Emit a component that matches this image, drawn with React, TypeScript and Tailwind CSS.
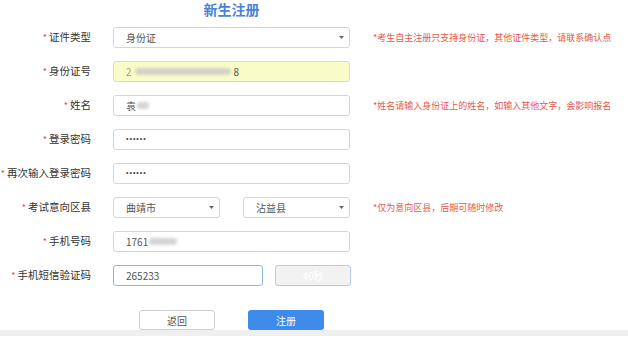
import React from "react";

const font = { fontFamily: '"Noto Sans CJK SC", "Noto Sans", sans-serif' };

function Caret() {
  return (
    <svg width="5" height="3" viewBox="0 0 5 3" className="shrink-0">
      <path d="M0 0 L5 0 L2.5 3 Z" fill="#666" />
    </svg>
  );
}

function Label({ text }: { text: string }) {
  return (
    <div className="w-[91px] shrink-0 flex justify-end items-center text-[10.5px] text-[#333] leading-none">
      <span className="text-[#e64a3b] mr-[2px] text-[9px]">*</span>
      {text}
    </div>
  );
}

function Hint({ text }: { text: string }) {
  return (
    <div className="ml-[23px] text-[9px] text-[#e8574a] leading-none whitespace-nowrap">
      {text}
    </div>
  );
}

function Box({
  children,
  className = "",
}: {
  children?: React.ReactNode;
  className?: string;
}) {
  return (
    <div
      className={
        "h-[21px] flex items-center px-[12px] text-[10px] text-[#555] border rounded-[3px] " +
        className
      }
    >
      {children}
    </div>
  );
}

function Blur({ w }: { w: number }) {
  return (
    <span
      className="inline-block h-[7px] bg-[#c9c9c9] rounded-full blur-[1.5px] opacity-80"
      style={{ width: w }}
    />
  );
}

function Dots() {
  return (
    <span className="font-['Liberation_Sans',sans-serif] text-[7px] tracking-[1px] text-[#444]">
      ••••••
    </span>
  );
}

export default function App() {
  return (
    <div className="w-[628px] h-[347px] bg-white overflow-hidden" style={font}>
      <div className="flex">
        <div className="w-[113px] shrink-0" />
        <div className="w-[237px] h-[27px] pt-[1px] text-center text-[14px] font-bold text-[#4a82d6] leading-[16px]">
          新生注册
        </div>
      </div>

      <div className="flex flex-col gap-[13px]">
        <div className="flex items-center">
          <Label text="证件类型" />
          <Box className="ml-[22px] w-[237px] justify-between border-[#d6d6d6] pr-[5px]">
            <span>身份证</span>
            <Caret />
          </Box>
          <Hint text="*考生自主注册只支持身份证，其他证件类型，请联系确认点" />
        </div>

        <div className="flex items-center">
          <Label text="身份证号" />
          <Box className="ml-[22px] w-[237px] bg-[#f9fcc6] border-[#dcdcc0] gap-[3px]">
            <span className="text-[#999] blur-[0.6px]">2</span>
            <Blur w={96} />
            <span>8</span>
          </Box>
        </div>

        <div className="flex items-center">
          <Label text="姓名" />
          <Box className="ml-[22px] w-[237px] border-[#d6d6d6] gap-[1px]">
            <span>袁</span>
            <Blur w={12} />
          </Box>
          <Hint text="*姓名请输入身份证上的姓名，如输入其他文字，会影响报名" />
        </div>

        <div className="flex items-center">
          <Label text="登录密码" />
          <Box className="ml-[22px] w-[237px] border-[#d6d6d6]">
            <Dots />
          </Box>
        </div>

        <div className="flex items-center">
          <Label text="再次输入登录密码" />
          <Box className="ml-[22px] w-[237px] border-[#d6d6d6]">
            <Dots />
          </Box>
        </div>

        <div className="flex items-center">
          <Label text="考试意向区县" />
          <Box className="ml-[22px] w-[107px] justify-between border-[#d6d6d6] pr-[5px]">
            <span>曲靖市</span>
            <Caret />
          </Box>
          <Box className="ml-[23px] w-[107px] justify-between border-[#d6d6d6] pr-[5px]">
            <span>沾益县</span>
            <Caret />
          </Box>
          <Hint text="*仅为意向区县，后期可随时修改" />
        </div>

        <div className="flex items-center">
          <Label text="手机号码" />
          <Box className="ml-[22px] w-[237px] border-[#d6d6d6] gap-[1px]">
            <span>1761</span>
            <Blur w={28} />
          </Box>
        </div>

        <div className="flex items-center">
          <Label text="手机短信验证码" />
          <Box className="ml-[22px] w-[150px] border-[#8fb6e2]">
            <span>265233</span>
          </Box>
          <div className="ml-[12px] w-[76px] h-[21px] flex items-center justify-center bg-[#f2f2f2] border border-[#b5cbe2] rounded-[3px] text-[10px] text-white">
            40秒
          </div>
        </div>
      </div>

      <div className="flex justify-center gap-[33px] mt-[24px] ml-[-165px]">
        <div className="w-[76px] h-[20px] flex items-center justify-center border border-[#cfcfcf] rounded-[3px] text-[10px] text-[#555]">
          返回
        </div>
        <div className="w-[76px] h-[20px] flex items-center justify-center bg-[#3d8ceb] rounded-[3px] text-[10px] text-white">
          注册
        </div>
      </div>

      <div className="h-[6px] bg-[#efefef]" />
    </div>
  );
}
